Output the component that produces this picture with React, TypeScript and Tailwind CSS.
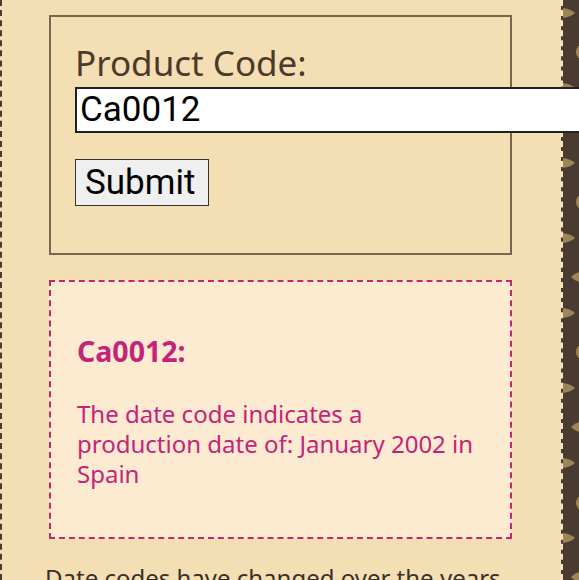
import React from "react";

const leafYs = [13, 88, 163, 238, 313, 388, 463, 538];
const leftYs = [127, 277, 427, 577];
const circleYs = [52, 202, 352, 503];

function Strip() {
  return (
    <div className="relative w-[18px] shrink-0 bg-[#4a3b31] border-l-2 border-dashed border-l-[#f6e4c2]">
      <svg width="16" height="580" viewBox="0 0 16 580" className="block">
        {leafYs.map((y) => (
          <path key={"l" + y} d={`M0 ${y - 5} Q8 ${y - 4} 12 ${y} Q8 ${y + 4} 0 ${y + 5} Z`} fill="#9d8558" />
        ))}
        {leftYs.map((y) => (
          <path key={"r" + y} d={`M16 ${y - 5} Q12 ${y - 4} 8 ${y} Q12 ${y + 4} 16 ${y + 5} Z`} fill="#9d8558" />
        ))}
        {circleYs.map((y) => (
          <circle key={"c" + y} cx="21" cy={y} r="8" fill="#9d8558" />
        ))}
      </svg>
    </div>
  );
}

export default function App() {
  return (
    <div className="flex h-[580px] w-[579px] overflow-hidden bg-[#f4dfb4]">
      <div className="flex-1 min-w-0 border-l-2 border-dashed border-l-[#4a3b31] pl-[47px] pt-[15px] font-['Noto_Sans',sans-serif]">
        <div className="w-[463px] border-2 border-[#7a6650] pl-[24px] pt-[26px] pb-[47px]">
          <div className="text-[35px] leading-[40px] text-[#4b3a2b]">Product Code:</div>
          <input
            defaultValue="Ca0012"
            className="relative z-10 mt-[4px] block h-[46px] w-[540px] border-2 border-[#222] bg-white pl-[3px] font-['Roboto',sans-serif] text-[35px] text-black outline-none"
          />
          <button className="mt-[26px] block h-[47px] w-[134px] border border-[#333] bg-[#efefef] px-[9px] text-left font-['Roboto',sans-serif] text-[35px] leading-none text-black">
            Submit
          </button>
        </div>
        <div className="mt-[25px] w-[463px] border-2 border-dashed border-[#c2286d] bg-[#fdebd1] pl-[26px] pr-[32px] pt-[52px] pb-[48px] text-[#c4237a]">
          <div className="text-[28.5px] font-bold leading-[35px]">Ca0012:</div>
          <p className="mt-[30px] text-[24px] leading-[30px]">
            The date code indicates a production date of: January 2002 in Spain
          </p>
        </div>
        <p className="mt-[24px] -ml-[4px] whitespace-nowrap text-[24px] leading-[30px] text-[#3b2f27]">
          Date codes have changed over the years
        </p>
      </div>
      <Strip />
    </div>
  );
}
